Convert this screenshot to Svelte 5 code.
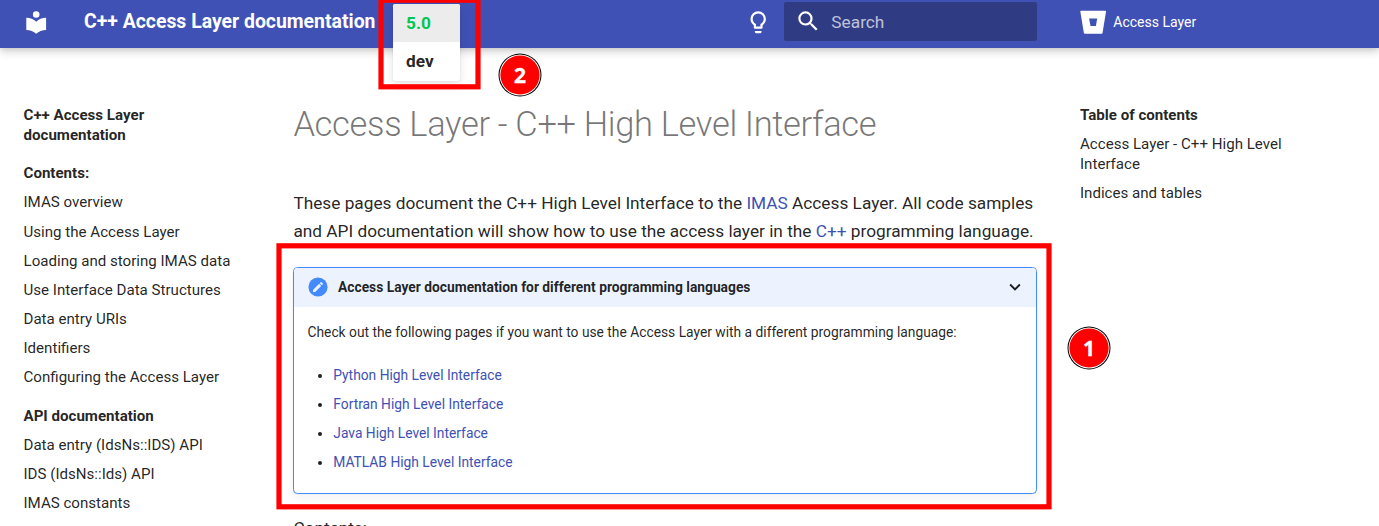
<script>
  const pages = ['IMAS overview', 'Using the Access Layer', 'Loading and storing IMAS data', 'Use Interface Data Structures', 'Data entry URIs', 'Identifiers', 'Configuring the Access Layer'];
  const api = ['Data entry (IdsNs::IDS) API', 'IDS (IdsNs::Ids) API', 'IMAS constants'];
  const languages = ['Python', 'Fortran', 'Java', 'MATLAB'];
  const markers = [{ label: '1', x: 1089, y: 348 }, { label: '2', x: 520, y: 75 }];
</script>

<div class="page">
  <header>
    <svg class="logo" viewBox="0 0 24 24"><path d="M12 8a3 3 0 0 0 3-3 3 3 0 0 0-3-3 3 3 0 0 0-3 3 3 3 0 0 0 3 3m0 3.54C9.64 9.35 6.5 8 3 8v11c3.5 0 6.64 1.35 9 3.54 2.36-2.19 5.5-3.54 9-3.54V8c-3.5 0-6.64 1.35-9 3.54Z"/></svg>
    <strong class="title">C++ Access Layer documentation</strong>
    <svg class="bulb" viewBox="0 0 24 24"><path d="M12 2a7 7 0 0 1 7 7c0 2.38-1.19 4.47-3 5.74V17a1 1 0 0 1-1 1H9a1 1 0 0 1-1-1v-2.26C6.19 13.47 5 11.38 5 9a7 7 0 0 1 7-7M9 21v-1h6v1a1 1 0 0 1-1 1h-4a1 1 0 0 1-1-1m3-17a5 5 0 0 0-5 5c0 2.05 1.23 3.81 3 4.58V16h4v-2.42c1.77-.77 3-2.53 3-4.58a5 5 0 0 0-5-5Z"/></svg>
    <div class="search">
      <svg viewBox="0 0 24 24"><path d="M9.5 3A6.5 6.5 0 0 1 16 9.5c0 1.61-.59 3.09-1.56 4.23l.27.27h.79l5 5-1.5 1.5-5-5v-.79l-.27-.27A6.516 6.516 0 0 1 9.5 16 6.5 6.5 0 0 1 3 9.5 6.5 6.5 0 0 1 9.5 3m0 2C7 5 5 7 5 9.5S7 14 9.5 14 14 12 14 9.5 12 5 9.5 5Z"/></svg>
      <span>Search</span>
    </div>
    <div class="source">
      <svg viewBox="0 0 512 512"><path d="M22.2 32A16 16 0 0 0 6 47.8a26.35 26.35 0 0 0 .2 2.8l67.9 412.1a21.77 21.77 0 0 0 21.3 18.2h325.7a16 16 0 0 0 16-13.4L505 50.7a16 16 0 0 0-13.2-18.3 24.58 24.58 0 0 0-2.8-.2L22.2 32zm285.9 297.8h-104l-28.1-147h157.3l-25.2 147z"/></svg>
      <span>Access Layer</span>
    </div>
  </header>

  <div class="columns">
    <nav class="side">
      <b class="site">C++ Access Layer documentation</b>
      <b>Contents:</b>
      {#each pages as page}<a href="#top">{page}</a>{/each}
      <b class="section">API documentation</b>
      {#each api as page}<a href="#top">{page}</a>{/each}
    </nav>
    <main>
      <h1>Access Layer - C++ High Level Interface</h1>
      <p class="intro">These pages document the C++ High Level Interface to the <a href="#top">IMAS</a> Access Layer. All code samples<br />and API documentation will show how to use the access layer in the <a href="#top">C++</a> programming language.</p>
      <section class="note">
        <div class="summary">
          <svg class="pencil" viewBox="0 0 20 20"><circle cx="10" cy="10" r="9.6" fill="#448aff"/><path fill="#ecf3ff" d="M5 12.9V15h2.1l6.1-6.1-2.1-2.1L5 12.9Zm9.8-5.6a.55.55 0 0 0 0-.8l-1.3-1.3a.55.55 0 0 0-.8 0l-1 1 2.1 2.1 1-1Z"/></svg>
          <strong>Access Layer documentation for different programming languages</strong>
          <svg class="chevron" viewBox="0 0 24 24"><path d="M7.41 8.58 12 13.17l4.59-4.59L18 10l-6 6-6-6 1.41-1.42Z"/></svg>
        </div>
        <p>Check out the following pages if you want to use the Access Layer with a different programming language:</p>
        <ul>
          {#each languages as language}<li><a href="#top">{language} High Level Interface</a></li>{/each}
        </ul>
      </section>
      <p class="after">Contents:</p>
    </main>
    <aside class="side">
      <b>Table of contents</b>
      <a href="#top">Access Layer - C++ High Level Interface</a>
      <a href="#top">Indices and tables</a>
    </aside>
  </div>

  <div class="versions"><span class="current">5.0</span><span>dev</span></div>
  <svg class="overlay" width="1379" height="526">
    <rect x="381" y=".2" width="97" height="86.6"/>
    <rect x="279" y="245.8" width="770" height="261"/>
    {#each markers as marker}
      <circle class="rim" cx={marker.x} cy={marker.y} r="21.5"/>
      <circle class="gap" cx={marker.x} cy={marker.y} r="20.5"/>
      <circle class="disc" cx={marker.x} cy={marker.y} r="19.6"/>
      <text x={marker.x} y={marker.y + 7.5}>{marker.label}</text>
    {/each}
  </svg>
</div>

<style>
  :global(body) { margin: 0; background: #fff; overflow: hidden; }
  .page { position: relative; height: 526px; overflow: hidden; font-family: Roboto, sans-serif; color: rgba(0, 0, 0, .87); }
  .page * { box-sizing: border-box; }
  a { color: #4051b5; text-decoration: none; }
  header { display: flex; align-items: flex-start; height: 48px; background: #4051b5; color: #fff; box-shadow: 0 0 4.4px rgba(0, 0, 0, .1), 0 4.4px 8.8px rgba(0, 0, 0, .2); position: relative; }
  header svg { fill: currentColor; flex: none; width: 26.4px; height: 26.4px; }
  .logo { margin: 9px 0 0 22.5px; }
  .title { width: 660.6px; margin-left: 35.1px; font-size: 19.42px; line-height: 44px; font-weight: 700; white-space: nowrap; }
  .bulb { margin-top: 9px; }
  .search { display: flex; align-items: center; width: 253px; height: 39px; margin: 2px 0 0 13px; padding-left: 11px; gap: 10px; border-radius: 2.2px; background: #2f3c84; font-size: 17.25px; }
  .search span { color: rgba(255, 255, 255, .7); }
  .source { display: flex; align-items: center; margin-left: 42.6px; height: 44px; gap: 7.3px; font-size: 14px; }
  .columns { display: grid; grid-template-columns: 230px 826.5px 240px; padding-left: 23.5px; }
  .side { display: flex; flex-direction: column; padding-top: 57.2px; font-size: 15.1px; line-height: 20.02px; gap: 9.1px; }
  .side a { color: inherit; }
  .side b { font-weight: 700; }
  .site { width: 150px; margin-bottom: 9px; }
  .section { margin-top: 9.8px; }
  main { margin-left: 39.9px; width: 743.6px; }
  h1 { margin: 54px 0 41px; font-size: 34.5px; line-height: 45.8px; font-weight: 300; letter-spacing: -.01em; color: rgba(0, 0, 0, .54); white-space: nowrap; }
  p { margin: 0; white-space: nowrap; }
  .intro { font-size: 17.25px; line-height: 28.16px; }
  .note { height: 227px; margin-top: 22px; border: 1px solid #448aff; border-radius: 4.4px; font-size: 13.8px; line-height: 22.5px; box-shadow: 0 4.4px 11px rgba(0, 0, 0, .05), 0 0 1.1px rgba(0, 0, 0, .1); overflow: hidden; }
  .summary { display: flex; align-items: center; height: 39px; padding: 0 9.6px 0 14px; background: #ecf3ff; }
  .pencil { width: 20px; height: 20px; margin: 0 9.6px 1px 0; }
  .chevron { width: 22px; height: 22px; margin: 0 0 1px auto; fill: currentColor; }
  .note p { margin: 14px 13.1px 20px; }
  ul { margin: 0; padding: 0 0 0 38.9px; }
  li { margin-bottom: 6.5px; }
  .after { margin-top: 20px; font-size: 17.25px; line-height: 28px; }
  .versions { position: absolute; left: 393px; top: 4px; width: 67px; height: 77px; border-radius: 2.2px; overflow: hidden; background: #fff; font-size: 17.25px; font-weight: 700; box-shadow: 0 4.4px 11px rgba(0, 0, 0, .1), 0 0 1.1px rgba(0, 0, 0, .25); }
  .versions span { display: block; height: 38px; padding-left: 13px; line-height: 39px; }
  .versions .current { color: #00c753; background: #ececec; }
  .overlay { position: absolute; left: 0; top: 0; }
  .overlay rect { fill: none; stroke: #f00; stroke-width: 5.2px; }
  .rim { fill: #000; }
  .gap { fill: #fff; }
  .disc { fill: #f00; }
  .overlay text { fill: #fff; font: 700 21px "Open Sans", sans-serif; text-anchor: middle; stroke: #fff; stroke-width: .3px; }
</style>
